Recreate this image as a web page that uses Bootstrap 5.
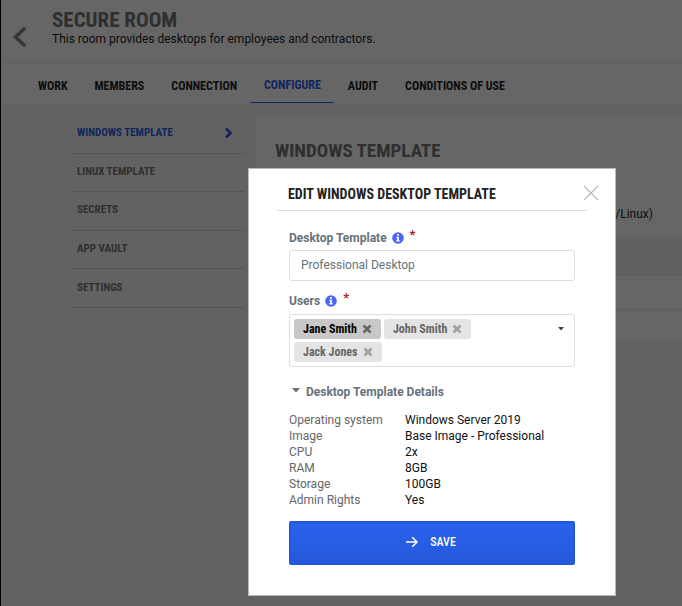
<!DOCTYPE html>
<html lang="en">
<head>
<meta charset="utf-8">
<meta name="viewport" content="width=device-width, initial-scale=1">
<title>Secure Room</title>
<link href="https://cdn.jsdelivr.net/npm/bootstrap@5.3.0/dist/css/bootstrap.min.css" rel="stylesheet">
<style>
  body { font: 400 12px/16px Roboto, sans-serif; color: #222; background: #f4f4f4; min-height: 100vh; }
  svg { display: block; flex: none; }
  .condensed { font-family: "Roboto Condensed", Roboto, sans-serif; font-weight: 700; }
  .shell { min-height: 100vh; border-left: 1px solid #000; }
  .room-head { height: 62px; padding: 10px 18px 0 11px; gap: 24px; }
  .room-head h1 { font-size: 21px; line-height: 21px; color: #757575; }
  .back-link { padding-top: 17px; color: #888; }
  .tabs { height: 41px; padding-left: 23px; border-top: 1px solid #f0f0f0; }
  .tabs .nav-link { padding: 15px 13px 0 14px; color: #222; border-bottom: 1px solid transparent; }
  .tabs .nav-link.active { color: #2b5de8; border-color: #2b5de8; padding-top: 14px; }
  .content { padding: 12px 0 0 70px; gap: 12px; }
  .side { width: 174px; height: 193px; }
  .side a { color: #777; font-size: 11px; padding: 0 12px 1px 6px; border-bottom: 1px solid #d5d5d5; text-decoration: none; }
  .side a.active { color: #2b5de8; }
  .panel h2 { font-size: 19px; line-height: 24px; color: #757575; padding: 24px 18px 0; }
  .panel p { padding: 43px 29px 14px; }
  .band { height: 40px; background: #f2f2f2; border-bottom: 1px solid #e8e8e8; }
  .line-row { height: 34px; border-bottom: 1px solid #e8e8e8; }
  .line-row:last-child { border: 0; height: 32px; }
  .modal-backdrop { --bs-backdrop-opacity: .6; }
  .modal { padding: 168px 66px 10px 0; }
  .modal-dialog { max-width: 368px; margin: 0 0 0 auto; }
  .modal-content { border: 1px solid #b8b8b8; border-radius: 0; color: #222; }
  .modal-header { margin: 0 28px; padding: 16px 0 7px 11px; border-color: #ddd; border-radius: 0; }
  .modal-header h2 { font-size: 14px; line-height: 18px; }
  .x-btn { margin: -2px -12px 0 0; color: #bbb; }
  .modal-body { padding: 19px 40px 30px; }
  .field-label { font-weight: 700; color: #66727a; gap: 5px; height: 16px; }
  .info { color: #4a66fb; }
  .star { color: #b02020; font-size: 13px; margin-top: -6px; padding-left: 1px; }
  .name-input { height: 31px; font-size: 12px; line-height: 16px; padding: 0 11px 2px; color: #66727a; border-color: #ddd; border-radius: 3px; margin-bottom: 12px; }
  .users { border: 1px solid #ddd; border-radius: 3px; padding: 4px 10px 4px 4px; margin: 5px 0 17px; }
  .chips { gap: 3px; }
  .chip { height: 20px; padding: 0 9px; gap: 5px; border-radius: 3px; background: #e4e4e4; color: #666; font-size: 12px; }
  .chip button { color: #a0a0a0; }
  .chip.selected { background: #c8c8c8; color: #000; }
  .chip.selected button { color: #666; }
  .caret { padding-top: 8px; color: #444; }
  .toggle { color: #66727a; font-size: 12px; line-height: 16px; font-weight: 700; gap: 6px; padding-left: 3px; margin-bottom: 12px; }
  .toggle svg { margin-bottom: 3px; }
  .specs { color: #111; line-height: 16px; margin-bottom: 13px; }
  .specs th, .specs td { padding: 0; }
  .specs th { width: 116px; font-weight: 400; color: #666; }
  .save-btn { height: 44px; font-size: 12px; font-weight: 500; gap: 12px; padding: 0 2px 3px 0; border-radius: 2px; background: linear-gradient(#2a62ec, #2559dc); border: 2px solid #2257dc; }
</style>
</head>
<body>
<div class="shell d-flex flex-column">
  <header class="room-head d-flex bg-white">
    <a href="#" class="back-link" aria-label="Back">
      <svg width="16" height="20" viewBox="0 0 16 20" fill="none" stroke="currentColor" stroke-width="3.6" stroke-linecap="round"><path d="M12 2 3.500 10l8.500 8"/></svg>
    </a>
    <div>
      <h1 class="condensed m-0">SECURE ROOM</h1>
      <div>This room provides desktops for employees and contractors.</div>
    </div>
  </header>
  <nav class="tabs nav flex-nowrap bg-white condensed text-nowrap">
    <a class="nav-link" href="#">WORK</a>
    <a class="nav-link" href="#">MEMBERS</a>
    <a class="nav-link" href="#">CONNECTION</a>
    <a class="nav-link active" href="#">CONFIGURE</a>
    <a class="nav-link" href="#">AUDIT</a>
    <a class="nav-link" href="#">CONDITIONS OF USE</a>
  </nav>
  <main class="content d-flex">
    <nav class="side d-flex flex-column flex-shrink-0 condensed">
      <a href="#" class="active d-flex flex-fill align-items-center justify-content-between">WINDOWS TEMPLATE
        <svg width="8" height="12" viewBox="0 0 8 12" fill="none" stroke="currentColor" stroke-width="2.600"><path d="M1 1.500 5.500 6 1 10.500"/></svg>
      </a>
      <a href="#" class="d-flex flex-fill align-items-center">LINUX TEMPLATE</a>
      <a href="#" class="d-flex flex-fill align-items-center">SECRETS</a>
      <a href="#" class="d-flex flex-fill align-items-center">APP VAULT</a>
      <a href="#" class="d-flex flex-fill align-items-center">SETTINGS</a>
    </nav>
    <section class="panel flex-fill bg-white">
      <h2 class="condensed m-0">WINDOWS TEMPLATE</h2>
      <p class="m-0 text-end">(Windows/Linux)</p>
      <div class="band"></div>
      <div class="line-row"></div>
      <div class="line-row"></div>
    </section>
  </main>
</div>

<div class="modal-backdrop show"></div>
<div class="modal d-block" tabindex="-1" role="dialog" aria-labelledby="dialogTitle">
  <div class="modal-dialog">
    <form class="modal-content">
      <div class="modal-header">
        <h2 class="condensed m-0" id="dialogTitle">EDIT WINDOWS DESKTOP TEMPLATE</h2>
        <button type="button" class="x-btn btn p-0 border-0" aria-label="Close">
          <svg width="16" height="16" viewBox="0 0 16 16" fill="none" stroke="currentColor" stroke-width="1.300"><path d="m1 1 14 14M15 1 1 15"/></svg>
        </button>
      </div>
      <div class="modal-body">
        <div class="field-label d-flex align-items-center mb-1">
          <label for="tplName">Desktop Template</label>
          <svg class="info" width="12" height="12" viewBox="0 0 12 12"><circle cx="6" cy="6" r="5.800" fill="currentColor"/><path fill="#fff" d="M5.100 2h1.800v1.700H5.100zM4.400 4.800h2.500v3.400h.8v1.200H4.300V8.200h.8V6h-.7z"/></svg>
          <span class="star">*</span>
        </div>
        <input id="tplName" class="name-input form-control" type="text" value="Professional Desktop">
        <div class="field-label d-flex align-items-center">
          <span>Users</span>
          <svg class="info" width="12" height="12" viewBox="0 0 12 12"><circle cx="6" cy="6" r="5.800" fill="currentColor"/><path fill="#fff" d="M5.100 2h1.800v1.700H5.100zM4.400 4.800h2.500v3.400h.8v1.200H4.300V8.200h.8V6h-.7z"/></svg>
          <span class="star">*</span>
        </div>
        <div class="users d-flex align-items-start">
          <div class="chips d-flex flex-wrap flex-fill">
            <span class="chip selected condensed d-flex align-items-center">Jane Smith
              <button type="button" class="btn p-0 border-0" aria-label="Remove Jane Smith"><svg width="10" height="10" viewBox="0 0 10 10" stroke="currentColor" stroke-width="2.500"><path d="m1.500 1.500 7 7m0-7-7 7"/></svg></button></span>
            <span class="chip condensed d-flex align-items-center">John Smith
              <button type="button" class="btn p-0 border-0" aria-label="Remove John Smith"><svg width="10" height="10" viewBox="0 0 10 10" stroke="currentColor" stroke-width="2.500"><path d="m1.500 1.500 7 7m0-7-7 7"/></svg></button></span>
            <span class="chip condensed d-flex align-items-center">Jack Jones
              <button type="button" class="btn p-0 border-0" aria-label="Remove Jack Jones"><svg width="10" height="10" viewBox="0 0 10 10" stroke="currentColor" stroke-width="2.500"><path d="m1.500 1.500 7 7m0-7-7 7"/></svg></button></span>
          </div>
          <button type="button" class="caret btn border-0 px-0 pb-0" aria-label="Show users"><svg width="6" height="4" viewBox="0 0 6 4"><path fill="currentColor" d="M0 0h6L3 3.500z"/></svg></button>
        </div>
        <button type="button" class="toggle btn border-0 py-0 pe-0 d-flex align-items-center" aria-expanded="true">
          <svg width="8" height="5" viewBox="0 0 8 5"><path fill="currentColor" d="M0 0h8L4 4.500z"/></svg>Desktop Template Details
        </button>
        <table class="specs w-100">
          <tr><th scope="row">Operating system</th><td>Windows Server 2019</td></tr>
          <tr><th scope="row">Image</th><td>Base Image - Professional</td></tr>
          <tr><th scope="row">CPU</th><td>2x</td></tr>
          <tr><th scope="row">RAM</th><td>8GB</td></tr>
          <tr><th scope="row">Storage</th><td>100GB</td></tr>
          <tr><th scope="row">Admin Rights</th><td>Yes</td></tr>
        </table>
        <button type="submit" class="save-btn btn btn-primary w-100 d-flex align-items-center justify-content-center condensed">
          <svg width="12" height="12" viewBox="0 0 12 12" fill="none" stroke="currentColor" stroke-width="1.600"><path d="M0 6h11M6.300 1.200 11 6l-4.700 4.800"/></svg>SAVE
        </button>
      </div>
    </form>
  </div>
</div>
<script src="https://cdn.jsdelivr.net/npm/bootstrap@5.3.0/dist/js/bootstrap.bundle.min.js"></script>
</body>
</html>
